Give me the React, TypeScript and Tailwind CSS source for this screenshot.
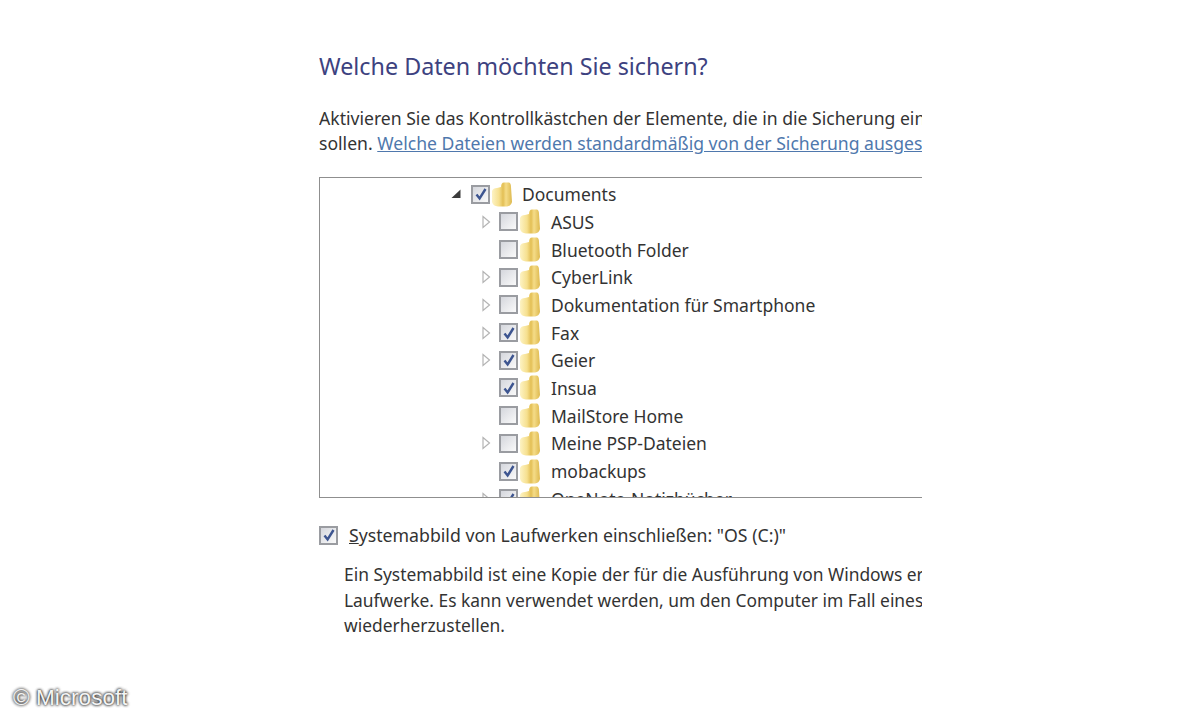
import React from 'react';

interface TreeRow {
  name: string;
  checked: boolean;
  expandable: boolean;
}

const rows: TreeRow[] = [
  { name: 'ASUS', checked: false, expandable: true },
  { name: 'Bluetooth Folder', checked: false, expandable: false },
  { name: 'CyberLink', checked: false, expandable: true },
  { name: 'Dokumentation für Smartphone', checked: false, expandable: true },
  { name: 'Fax', checked: true, expandable: true },
  { name: 'Geier', checked: true, expandable: true },
  { name: 'Insua', checked: true, expandable: false },
  { name: 'MailStore Home', checked: false, expandable: false },
  { name: 'Meine PSP-Dateien', checked: false, expandable: true },
  { name: 'mobackups', checked: true, expandable: false },
  { name: 'OneNote-Notizbücher', checked: true, expandable: true },
];

const CheckBox = ({ checked }: { checked: boolean }) => (
  <span className="w-[19px] h-[19px] shrink-0 border-2 border-[#9a9ca1] bg-gradient-to-br from-[#d5d7dd] to-[#fafafa] flex items-center justify-center">
    {checked && (
      <svg width="14" height="14" viewBox="0 0 14 14">
        <path d="M2.5 7.5 L5.6 11.5 L11.5 2" fill="none" stroke="#3d5590" strokeWidth="2.4" />
      </svg>
    )}
  </span>
);

const Folder = () => (
  <svg width="22" height="25" viewBox="0 0 22 25" className="shrink-0 ml-[1px]">
    <defs>
      <linearGradient id="folderFill" x1="0" y1="0" x2="1" y2="0">
        <stop offset="0" stopColor="#fdf3c4" />
        <stop offset="0.35" stopColor="#f6e08f" />
        <stop offset="0.55" stopColor="#e3bf55" />
        <stop offset="0.7" stopColor="#f5dc88" />
        <stop offset="1" stopColor="#ddb94f" />
      </linearGradient>
    </defs>
    <path d="M1 9 Q2 6 6 6 L10 5 Q10 0.5 13 0.5 L18 0.5 Q20 1 20 5 L21 20 Q20 24 16 24.5 L7 24.5 Q2 24 1 20 Z" fill="url(#folderFill)" />
  </svg>
);

const Arrow = ({ open }: { open?: boolean }) =>
  open ? (
    <svg width="10" height="10" viewBox="0 0 10 10" className="shrink-0">
      <path d="M0.5 9 L9.5 9 L9.5 0.5 Z" fill="#3c3c3c" />
    </svg>
  ) : (
    <svg width="10" height="14" viewBox="0 0 10 14" className="shrink-0">
      <path d="M2 1.5 L8.5 7 L2 12.5 Z" fill="#fff" stroke="#b4b4b4" strokeWidth="1.2" />
    </svg>
  );

export default function App() {
  return (
    <div className="relative w-[1200px] h-[720px] bg-white overflow-hidden font-['Noto_Sans','Open_Sans',sans-serif] text-[#333333]">
      <div className="w-[603px] ml-[319px] pt-[50px] overflow-hidden whitespace-nowrap">
        <h1 className="text-[23.3px] leading-[32px] font-normal text-[#3d4280]">Welche Daten möchten Sie sichern?</h1>

        <p className="mt-[24px] text-[17.6px] leading-[25px]">
          Aktivieren Sie das Kontrollkästchen der Elemente, die in die Sicherung einbezogen werden
          <br />
          sollen. <span className="text-[#4f78ad] underline">Welche Dateien werden standardmäßig von der Sicherung ausgeschlossen?</span>
        </p>

        <div className="mt-[21px] h-[321px] border-y border-l border-[#8f8f8f] pt-[2px] overflow-hidden">
          <div className="h-[28px] flex items-center pl-[131px]">
            <Arrow open />
            <span className="w-[10px] shrink-0" />
            <CheckBox checked />
            <Folder />
            <span className="ml-[9px] text-[17.5px] leading-[26px]">Documents</span>
          </div>
          {rows.map((row) => (
            <div key={row.name} className="h-[27.7px] flex items-center pl-[161px]">
              <span className="w-[18px] shrink-0">{row.expandable && <Arrow />}</span>
              <CheckBox checked={row.checked} />
              <Folder />
              <span className="ml-[10px] text-[17.5px] leading-[26px]">{row.name}</span>
            </div>
          ))}
        </div>

        <div className="mt-[25px] flex items-center h-[24px]">
          <CheckBox checked />
          <span className="ml-[11px] text-[17.7px]">
            <span className="underline">S</span>ystemabbild von Laufwerken einschließen: "OS (C:)"
          </span>
        </div>

        <p className="mt-[15px] ml-[25px] text-[17.4px] leading-[25.5px]">
          Ein Systemabbild ist eine Kopie der für die Ausführung von Windows erforderlichen
          <br />
          Laufwerke. Es kann verwendet werden, um den Computer im Fall eines Ausfalls
          <br />
          wiederherzustellen.
        </p>
      </div>

      <div className="absolute left-[13px] top-[686px] text-[22.6px] leading-[24px] font-['Liberation_Sans',sans-serif] text-[#f4f4f4] [text-shadow:0_0_3px_#222,0_0_3px_#222]">
        © Microsoft
      </div>
    </div>
  );
}
